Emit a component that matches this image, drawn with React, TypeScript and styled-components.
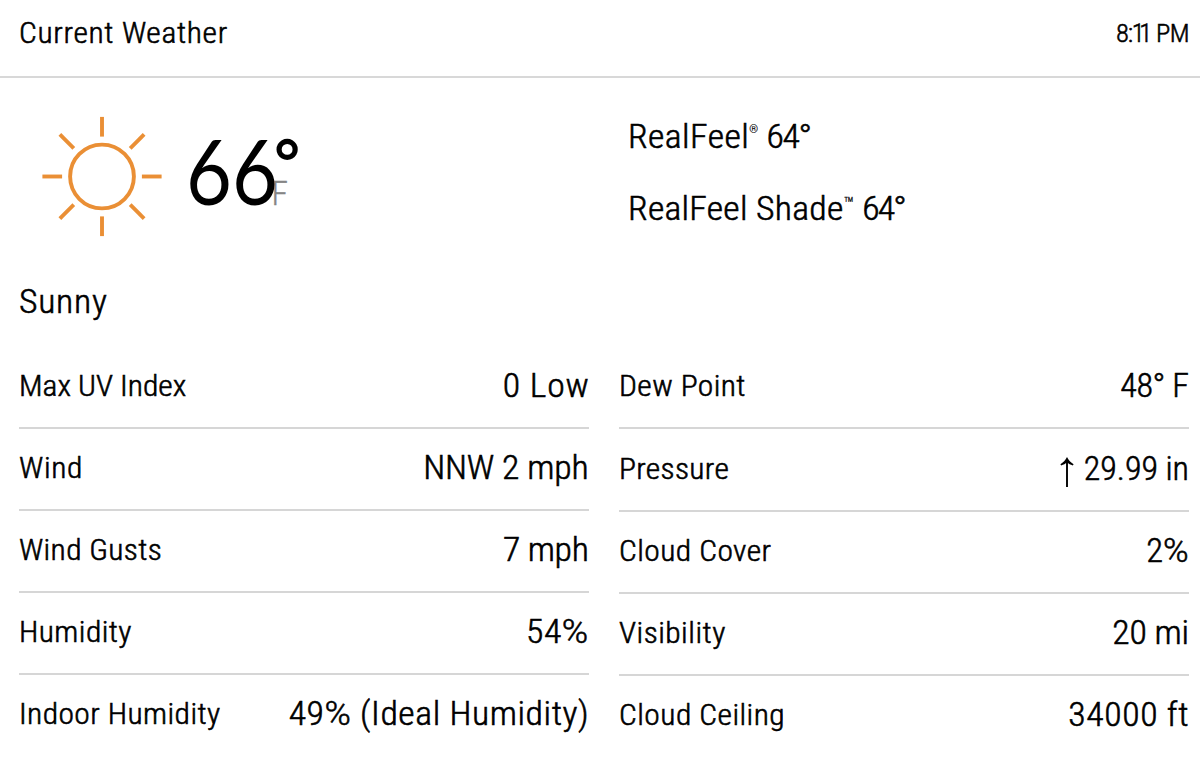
import React from 'react';
import styled, { createGlobalStyle } from 'styled-components';

const GlobalStyle = createGlobalStyle`
  *, *::before, *::after { box-sizing: border-box; }
  body {
    margin: 0;
    background: #fff;
    color: #000;
    font-family: Roboto, 'Open Sans', sans-serif;
    font-stretch: 75%;
    font-weight: 300;
    overflow: hidden;
  }
`;

const Card = styled.main`
  width: 1200px;
  height: 769px;
  background: #fff;
`;

const Text = styled.span<{ $spacing?: number; $stretch?: number }>`
  display: block;
  line-height: 40px;
  white-space: nowrap;
  letter-spacing: ${p => p.$spacing ?? 0.4}px;
  transform: scaleX(${p => p.$stretch ?? 1.05});
  transform-origin: 0 50%;
  -webkit-text-stroke: 0.55px currentColor;
`;

const SmallText = styled(Text)`
  font-size: 30px;
`;

const LargeText = styled(Text)`
  font-size: 34px;
`;

const Value = styled(LargeText)`
  margin: 0 ${p => -(p.$spacing ?? 0.4)}px 1px 0;
  transform-origin: 100% 50%;
`;

const Header = styled.header`
  display: flex;
  justify-content: space-between;
  height: 78px;
  padding: 13px 11px 0 18.5px;
  border-bottom: 2px solid #d8d8d8;
`;

const Time = styled(Text)`
  font-size: 26.5px;
`;

const Kern = styled.span<{ $by: number }>`
  letter-spacing: ${p => p.$by}px;
`;

const Overview = styled.section`
  display: grid;
  grid-template-columns: 608.5px 1fr;
  height: 203px;
  padding-left: 19px;
`;

const Conditions = styled.div`
  display: flex;
  padding: 38px 0 0 22px;
`;

const SunIcon = styled.svg`
  display: block;
  width: 122px;
  height: 122px;
  flex: none;
`;

const Temperature = styled.div`
  display: flex;
  align-items: flex-start;
  height: 100px;
  padding-left: 23px;
  line-height: 100px;
  margin-top: 4px;
`;

const Degrees = styled.span`
  display: block;
  width: 86px;
  font-family: Lato, Roboto, sans-serif;
  font-weight: 400;
  font-size: 92px;
  transform: scaleX(0.86);
  transform-origin: 0 0;
`;

const DegreeMark = styled.span`
  width: 0;
  margin: 1px 0 0 -1px;
  font-weight: 400;
  font-size: 86px;
`;

const Unit = styled.span`
  margin: 54px 0 0 0.5px;
  color: #858585;
  font-size: 33.5px;
  line-height: 40px;
  -webkit-text-stroke: 0.3px #858585;
`;

const RealFeelList = styled.div`
  display: flex;
  flex-direction: column;
  gap: 32px;
  padding-top: 37.5px;
`;

const Mark = styled.span<{ $size: number; $raise: number }>`
  font-size: ${p => p.$size}px;
  line-height: 0;
  letter-spacing: 0;
  vertical-align: ${p => p.$raise}px;
  -webkit-text-stroke-width: 0.2px;
`;

const Phrase = styled.div`
  height: 66px;
  padding-left: 18.5px;
`;

const Details = styled.section`
  display: grid;
  grid-template-columns: 570px 570px;
  column-gap: 30.5px;
  padding-left: 18.5px;
`;

const Row = styled.div<{ $height?: number }>`
  display: flex;
  justify-content: space-between;
  align-items: flex-end;
  height: ${p => p.$height ?? 82}px;
  padding-bottom: 21px;
  border-bottom: 2px solid #d6d6d6;

  &:last-child {
    border-bottom-color: transparent;
  }
`;

const Wide = styled.span`
  font-stretch: 100%;
`;

const Arrow = styled.svg`
  display: inline-block;
  width: 14px;
  height: 30px;
  margin-right: 10px;
  vertical-align: -7px;
`;

const rays = [0, 45, 90, 135, 180, 225, 270, 315];

function Sun() {
  return (
    <SunIcon viewBox="0 0 122 122" fill="none" stroke="#ea8f35" strokeWidth="3.9">
      <circle cx="61" cy="60.5" r="31.9" />
      {rays.map(angle => (
        <path key={angle} d="M61 0.9V20.6" transform={`rotate(${angle} 61 60.5)`} />
      ))}
    </SunIcon>
  );
}

function Rising() {
  return (
    <Arrow viewBox="0 0 14 30">
      <path d="M7 2V30" stroke="#000" strokeWidth="1.9" />
      <path d="M7 0C8.6 3.2 10.8 5.6 13.6 7.2L12.8 8.5C10.4 7.8 8.6 6.8 7 5.6C5.4 6.8 3.6 7.8 1.2 8.5L0.4 7.2C3.2 5.6 5.4 3.2 7 0Z" />
    </Arrow>
  );
}

type Detail = {
  label: string;
  labelSpacing: number;
  value: React.ReactNode;
  valueSpacing: number;
  valueStretch?: number;
  height?: number;
};

const left: Detail[] = [
  { label: 'Max UV Index', labelSpacing: 0, value: '0 Low', valueSpacing: 0.75 },
  { label: 'Wind', labelSpacing: 0.6, value: 'NNW 2 mph', valueSpacing: -0.15 },
  { label: 'Wind Gusts', labelSpacing: 0.32, value: '7 mph', valueSpacing: -0.3 },
  { label: 'Humidity', labelSpacing: 0.4, value: <>54<Wide>%</Wide></>, valueSpacing: 0.5 },
  { label: 'Indoor Humidity', labelSpacing: 0.4, value: <>49<Wide>%</Wide> (Ideal Humidity)</>, valueSpacing: 0.54 },
];

const right: Detail[] = [
  { label: 'Dew Point', labelSpacing: 0.38, value: '48° F', valueSpacing: -0.4, valueStretch: 1 },
  { label: 'Pressure', labelSpacing: 0.3, value: <><Rising />29.99 in</>, valueSpacing: -0.05, valueStretch: 1, height: 83 },
  { label: 'Cloud Cover', labelSpacing: 0.42, value: <>2<Wide>%</Wide></>, valueSpacing: 0, valueStretch: 1.02 },
  { label: 'Visibility', labelSpacing: 0.45, value: '20 mi', valueSpacing: -0.2 },
  { label: 'Cloud Ceiling', labelSpacing: 0.43, value: '34000 ft', valueSpacing: 0.6 },
];

function DetailColumn({ items }: { items: Detail[] }) {
  return (
    <div>
      {items.map(item => (
        <Row key={item.label} $height={item.height}>
          <SmallText $spacing={item.labelSpacing}>{item.label}</SmallText>
          <Value $spacing={item.valueSpacing} $stretch={item.valueStretch}>{item.value}</Value>
        </Row>
      ))}
    </div>
  );
}

export default function App() {
  return (
    <>
      <GlobalStyle />
      <Card>
        <Header>
          <SmallText $spacing={0.63}>Current Weather</SmallText>
          <Time $spacing={-0.6} $stretch={1}>
            <Kern $by={-1.2}>8:</Kern>
            <Kern $by={-5.4}>1</Kern>
            <Kern $by={-1.5}>1</Kern> PM
          </Time>
        </Header>
        <Overview>
          <Conditions>
            <Sun />
            <Temperature>
              <Degrees>66</Degrees>
              <DegreeMark>°</DegreeMark>
              <Unit>F</Unit>
            </Temperature>
          </Conditions>
          <RealFeelList>
            <LargeText $spacing={0.42}>
              RealFeel<Mark $size={10.5} $raise={15.5}>®</Mark> <Kern $by={-1.3}>64°</Kern>
            </LargeText>
            <LargeText $spacing={0.24}>
              RealFeel Shade<Mark $size={18.5} $raise={10}>™</Mark> <Kern $by={-1.8}>64°</Kern>
            </LargeText>
          </RealFeelList>
        </Overview>
        <Phrase>
          <LargeText $spacing={0.7}>Sunny</LargeText>
        </Phrase>
        <Details>
          <DetailColumn items={left} />
          <DetailColumn items={right} />
        </Details>
      </Card>
    </>
  );
}
